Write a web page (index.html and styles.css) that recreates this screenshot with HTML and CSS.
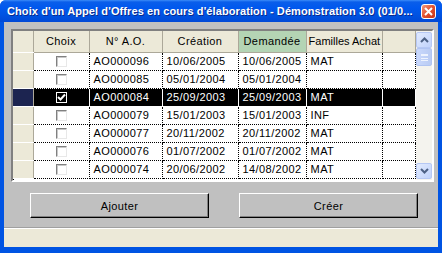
FILE: index.html
```html
<!DOCTYPE html>
<html lang="fr">
<head>
    <meta charset="UTF-8">
    <title>Choix d'un Appel d'Offres</title>
    <link rel="stylesheet" href="styles.css">
</head>
<body>
    <div class="window">
        <div class="titlebar">
            <span class="title">Choix d'un Appel d'Offres en cours d'élaboration - Démonstration 3.0 (01/0...</span>
            <span class="close-btn">
                <svg width="9" height="9" viewBox="0 0 9 9"><path d="M1 1 L8 8 M8 1 L1 8" stroke="#fff" stroke-width="2"/></svg>
            </span>
        </div>

        <div class="client">
            <div class="grid-frame">
                <table class="grid">
                    <colgroup>
                        <col class="c-sel"><col class="c-choix"><col class="c-num"><col class="c-date"><col class="c-dem"><col class="c-fam"><col>
                    </colgroup>
                    <thead>
                        <tr>
                            <th class="sel"></th>
                            <th>Choix</th>
                            <th>N° A.O.</th>
                            <th>Création</th>
                            <th class="sorted">Demandée</th>
                            <th class="left">Familles Achat</th>
                            <th></th>
                        </tr>
                    </thead>
                    <tbody>
                        <tr><td class="sel"></td><td class="chk"><span class="box"></span></td><td>AO000096</td><td>10/06/2005</td><td>10/06/2005</td><td>MAT</td><td></td></tr>
                        <tr><td class="sel"></td><td class="chk"><span class="box"></span></td><td>AO000085</td><td>05/01/2004</td><td>05/01/2004</td><td></td><td></td></tr>
                        <tr class="selected"><td class="sel"></td><td class="chk"><span class="box checked">
                            <svg width="9" height="9" viewBox="0 0 9 9"><path d="M1 4 L3.5 6.5 L8 1.5" stroke="#fff" stroke-width="2" fill="none"/></svg>
                        </span></td><td>AO000084</td><td>25/09/2003</td><td>25/09/2003</td><td>MAT</td><td></td></tr>
                        <tr><td class="sel"></td><td class="chk"><span class="box"></span></td><td>AO000079</td><td>15/01/2003</td><td>15/01/2003</td><td>INF</td><td></td></tr>
                        <tr><td class="sel"></td><td class="chk"><span class="box"></span></td><td>AO000077</td><td>20/11/2002</td><td>20/11/2002</td><td>MAT</td><td></td></tr>
                        <tr><td class="sel"></td><td class="chk"><span class="box"></span></td><td>AO000076</td><td>01/07/2002</td><td>01/07/2002</td><td>MAT</td><td></td></tr>
                        <tr><td class="sel"></td><td class="chk"><span class="box"></span></td><td>AO000074</td><td>20/06/2002</td><td>14/08/2002</td><td>MAT</td><td></td></tr>
                    </tbody>
                </table>

                <div class="scrollbar">
                    <div class="sb-btn">
                        <svg width="9" height="6" viewBox="0 0 9 6"><path d="M1 5 L4.5 1.5 L8 5" stroke="#4D6185" stroke-width="2" fill="none"/></svg>
                    </div>
                    <div class="sb-thumb"><span class="grip"></span></div>
                    <div class="sb-track"></div>
                    <div class="sb-btn">
                        <svg width="9" height="6" viewBox="0 0 9 6"><path d="M1 1 L4.5 4.5 L8 1" stroke="#4D6185" stroke-width="2" fill="none"/></svg>
                    </div>
                </div>
            </div>

            <div class="actions">
                <button class="btn">Ajouter</button>
                <button class="btn">Créer</button>
            </div>

            <div class="status-bar"></div>
        </div>
    </div>
</body>
</html>
```

FILE: styles.css
```css
* {
    margin: 0;
    padding: 0;
    box-sizing: border-box;
}

body {
    font-family: "Liberation Sans", Arial, sans-serif;
    font-size: 11px;
    letter-spacing: 0.4px;
    color: #000;
    background: #fff;
}

.window {
    width: 442px;
    height: 253px;
    display: flex;
    flex-direction: column;
    background: #0054e3;
    border-radius: 6px 6px 0 0;
}

/* title bar */
.titlebar {
    height: 22px;
    display: flex;
    align-items: center;
    padding: 0 6px 0 7px;
    background: linear-gradient(#3c8cf8 0, #0a5eea 2px, #0058ee 8px, #0054e3 14px, #0048d6 22px);
    border-radius: 6px 6px 0 0;
}

.title {
    flex: 1;
    color: #fff;
    font-weight: bold;
    font-size: 11px;
    letter-spacing: 0.1px;
    white-space: nowrap;
    overflow: hidden;
    text-shadow: 1px 1px 0 #0a2a8c;
}

.close-btn {
    width: 15px;
    height: 15px;
    display: flex;
    align-items: center;
    justify-content: center;
    border: 1px solid #fff;
    border-radius: 3px;
    background: linear-gradient(135deg, #f29a80, #e2512f 50%, #c63418);
}

/* client area */
.client {
    flex: 1;
    display: flex;
    flex-direction: column;
    margin: 0 4px 6px 4px;
    background: #c0c0c0;
}

.grid-frame {
    display: flex;
    margin: 7px 4px 0 7px;
    height: 153px;
    background: #fff;
    border-top: 2px solid #808080;
    border-left: 2px solid #808080;
    border-bottom: 2px solid #fff;
    border-right: 2px solid #fff;
    box-shadow: inset 1px 1px 0 #000;
}

.grid {
    flex: 1;
    border-collapse: collapse;
    table-layout: fixed;
    align-self: flex-start;
}

.c-sel { width: 20px; }
.c-choix { width: 56px; }
.c-num { width: 73px; }
.c-date { width: 76px; }
.c-dem { width: 68px; }
.c-fam { width: 72px; }

th {
    height: 21px;
    font-weight: normal;
    text-align: center;
    background: #ece9d8;
    border-right: 1px solid #aca899;
    border-bottom: 1px solid #aca899;
    white-space: nowrap;
    overflow: hidden;
    padding: 0 2px;
}

th.sorted {
    background: #b4d4b4;
}

th.left {
    text-align: left;
    letter-spacing: 0;
}

td {
    height: 18px;
    padding: 0 4px;
    border-right: 1px dotted #000;
    border-bottom: 1px dotted #000;
    white-space: nowrap;
    overflow: hidden;
}

td.sel, th.sel {
    background: #ece9d8;
    border-right: 1px solid #aca899;
    border-bottom: 1px solid #fff;
    padding: 0;
}

td.chk {
    text-align: center;
    padding: 0;
}

.box {
    display: inline-block;
    width: 11px;
    height: 11px;
    vertical-align: middle;
    border-top: 1px solid #808080;
    border-left: 1px solid #808080;
    border-bottom: 1px solid #e8e8e8;
    border-right: 1px solid #e8e8e8;
    box-shadow: inset 1px 1px 0 #c8c8c8;
}

.box.checked {
    background: #000;
    border-color: #fff;
    box-shadow: none;
    display: inline-flex;
    align-items: center;
    justify-content: center;
}

tr.selected td {
    background: #000;
    color: #fff;
    border-right-color: #fff;
    border-bottom-color: #fff;
}

tr.selected td.sel {
    background: #1c2450;
    border-right: 1px solid #aca899;
}

/* scrollbar */
.scrollbar {
    width: 16px;
    display: flex;
    flex-direction: column;
    background: #f4f3ee;
    padding: 1px 0;
}

.sb-btn {
    height: 16px;
    display: flex;
    align-items: center;
    justify-content: center;
    background: linear-gradient(135deg, #e1eafe, #c1d3fb);
    border: 1px solid #b6c8f4;
    border-radius: 2px;
}

.sb-thumb {
    height: 18px;
    display: flex;
    align-items: center;
    justify-content: center;
    background: linear-gradient(90deg, #c9d8fc, #b9cbf3);
    border: 1px solid #b0c4f2;
    border-radius: 2px;
}

.grip {
    width: 7px;
    height: 7px;
    border-top: 1px solid #eef3fe;
    border-bottom: 1px solid #eef3fe;
    background: linear-gradient(#eef3fe 0 1px, transparent 1px 3px, #eef3fe 3px 4px, transparent 4px);
}

.sb-track {
    flex: 1;
}

/* buttons */
.actions {
    display: flex;
    flex: 1;
    gap: 30px;
    padding: 11px 20px 0 26px;
}

.btn {
    width: 179px;
    height: 25px;
    font-family: "Liberation Sans", Arial, sans-serif;
    font-size: 11px;
    letter-spacing: 0.4px;
    background: #c0c0c0;
    border-top: 1px solid #fff;
    border-left: 1px solid #fff;
    border-bottom: 1px solid #000;
    border-right: 1px solid #000;
    box-shadow: inset -1px -1px 0 #808080;
}

.status-bar {
    height: 20px;
    background: #ece9d8;
    border-top: 1px solid #a0a0a0;
    box-shadow: inset 0 1px 0 #fff;
}
```
